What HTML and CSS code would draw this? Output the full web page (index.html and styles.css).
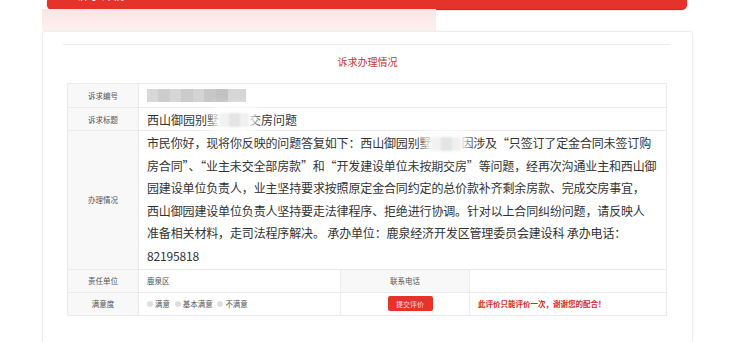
FILE: index.html
```html
<!DOCTYPE html>
<html lang="zh-CN">
<head>
  <meta charset="UTF-8" />
  <meta name="viewport" content="width=device-width, initial-scale=1.0" />
  <title>诉求办理情况</title>
  <link rel="stylesheet" href="styles.css">
</head>
<body>
  <div class="topbar"><span>诉求详情</span></div>
  <div class="fade"></div>

  <div class="card">
    <div class="rule"></div>
    <h2 class="title">诉求办理情况</h2>

    <table class="info">
      <colgroup>
        <col class="c-label">
        <col class="c-value">
        <col class="c-label2">
        <col class="c-rest">
      </colgroup>
      <tr class="r-short">
        <th>诉求编号</th>
        <td colspan="3"><span class="mosaic"></span></td>
      </tr>
      <tr class="r-short">
        <th>诉求标题</th>
        <td colspan="3" class="big">西山御园别墅<span class="blur"></span>交房问题</td>
      </tr>
      <tr>
        <th>办理情况</th>
        <td colspan="3" class="big reply">市民你好，现将你反映的问题答复如下：西山御园别墅<span class="blur"></span>因涉及“只签订了定金合同未签订购<br>房合同”、“业主未交全部房款”和“开发建设单位未按期交房”等问题，经再次沟通业主和西山御<br>园建设单位负责人，业主坚持要求按照原定金合同约定的总价款补齐剩余房款、完成交房事宜，<br>西山御园建设单位负责人坚持要走法律程序、拒绝进行协调。针对以上合同纠纷问题，请反映人<br>准备相关材料，走司法程序解决。 承办单位：鹿泉经济开发区管理委员会建设科 承办电话：<br>82195818</td>
      </tr>
      <tr class="r-short">
        <th>责任单位</th>
        <td>鹿泉区</td>
        <th>联系电话</th>
        <td></td>
      </tr>
      <tr class="r-short">
        <th>满意度</th>
        <td>
          <label class="radio"><i></i>满意</label>
          <label class="radio"><i></i>基本满意</label>
          <label class="radio"><i></i>不满意</label>
        </td>
        <td class="btn-cell"><button class="submit">提交评价</button></td>
        <td class="note">此评价只能评价一次，谢谢您的配合！</td>
      </tr>
    </table>
  </div>
</body>
</html>
```

FILE: styles.css
```css
body {
  margin: 0;
  background: #fff;
  font-family: "Noto Sans CJK SC", "Noto Sans", sans-serif;
  color: #333;
  width: 740px;
  height: 342px;
  overflow: hidden;
}
.topbar {
  margin-left: 47px;
  width: 640px;
  height: 9px;
  background: #e5322a;
  border-radius: 0 0 5px 5px;
  box-shadow: 0 1px 1px #a8231c;
  overflow: hidden;
}
.topbar span {
  display: block;
  margin: -12px 0 0 30px;
  color: #fff;
  font-size: 12px;
  line-height: 13px;
}
.fade {
  margin-left: 42px;
  width: 394px;
  height: 22px;
  background: linear-gradient(#fbe5e3, #fdf1f0);
}
.card {
  margin-left: 42px;
  width: 651px;
  height: 311px;
  border: 1px solid #eeeeee;
  border-bottom: none;
  border-radius: 3px 3px 0 0;
  box-shadow: 0 0 3px rgba(0,0,0,0.04);
  padding-top: 12px;
  box-sizing: border-box;
}
.rule {
  height: 1px;
  background: #ececec;
  margin: 0 22px 0 20px;
}
.title {
  margin: 10px 0 14px;
  font-size: 10px;
  line-height: 14px;
  font-weight: normal;
  text-align: center;
  color: #c0392b;
}
.info {
  margin-left: 24px;
  width: 599px;
  table-layout: fixed;
  border-collapse: collapse;
  font-size: 7.5px;
}
.c-label { width: 71px; }
.c-value { width: 202px; }
.c-label2 { width: 129px; }
.c-rest { width: 197px; }
.info th, .info td {
  border: 1px solid #ebebeb;
  padding: 0 8px;
  vertical-align: middle;
}
.info th {
  background: #f8f8f8;
  font-weight: normal;
  color: #555;
  text-align: center;
}
.info td {
  color: #555;
}
.r-short th, .r-short td {
  height: 22px;
}
.info tr:first-child th, .info tr:first-child td {
  height: 23px;
}
.big {
  font-size: 12px;
  color: #333 !important;
}
.reply {
  line-height: 22.6px;
  padding: 1px 0 1px 8px !important;
  white-space: nowrap;
  letter-spacing: -0.15px;
}
.mosaic {
  display: inline-block;
  vertical-align: middle;
  width: 99px;
  height: 13px;
  background: linear-gradient(90deg, #d8d8d8 0 11%, #cdcdcd 11% 23%, #d6d6d6 23% 34%, #cbcbcb 34% 46%, #d4d4d4 46% 58%, #c7c7c7 58% 70%, #c2c2c2 70% 82%, #d6d6d6 82% 100%);
  filter: blur(0.6px);
}
.blur {
  display: inline-block;
  vertical-align: middle;
  width: 30px;
  height: 14px;
  margin-top: -2px;
  background: linear-gradient(90deg, #f2f2f2 0 35%, #e4e4e4 35% 70%, #f0f0f0 70% 100%);
  box-shadow: 0 0 8px 7px rgba(255,255,255,0.85);
  filter: blur(0.8px);
}
.radio {
  display: inline-flex;
  align-items: center;
  gap: 2px;
  margin-right: 3px;
}
.radio i {
  width: 6px;
  height: 6px;
  border-radius: 50%;
  background: #dedede;
}
.btn-cell {
  text-align: center;
  padding-left: 18px !important;
}
.submit {
  width: 45px;
  height: 15px;
  padding: 0;
  border: none;
  border-radius: 2px;
  background: #e5332a;
  color: #fde;
  font-family: inherit;
  font-size: 7px;
}
.note {
  color: #d9261c !important;
  font-weight: bold;
}
```
